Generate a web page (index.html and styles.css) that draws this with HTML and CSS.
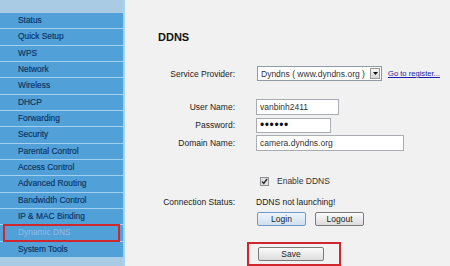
FILE: index.html
```html
<!DOCTYPE html>
<html lang="en">

<head>
    <meta charset="UTF-8">
    <meta name="viewport" content="width=device-width, initial-scale=1.0">
    <link rel="stylesheet" href="styles.css">
</head>

<body>
    <div class="page">
        <nav class="menu">
            <div class="menu-band"></div>
            <ul class="menu-list">
                <li>Status</li>
                <li>Quick Setup</li>
                <li>WPS</li>
                <li>Network</li>
                <li>Wireless</li>
                <li>DHCP</li>
                <li>Forwarding</li>
                <li>Security</li>
                <li>Parental Control</li>
                <li>Access Control</li>
                <li>Advanced Routing</li>
                <li>Bandwidth Control</li>
                <li>IP &amp; MAC Binding</li>
                <li class="active">Dynamic DNS</li>
                <li>System Tools</li>
            </ul>
        </nav>

        <main class="content">
            <h1 class="title">DDNS</h1>

            <div class="row row-provider">
                <label class="label">Service Provider:</label>
                <div class="value">
                    <div class="select">
                        <span class="select-text">Dyndns ( www.dyndns.org )</span>
                        <span class="select-arrow">
                            <svg width="5" height="3" viewBox="0 0 5 3"><path d="M0 0h5L2.5 3z" fill="#111"/></svg>
                        </span>
                    </div>
                    <a href="#" class="link">Go to register...</a>
                </div>
            </div>

            <div class="row row-user">
                <label class="label" for="username">User Name:</label>
                <div class="value"><input type="text" id="username" class="field field-user" value="vanbinh2411"></div>
            </div>

            <div class="row row-pass">
                <label class="label" for="password">Password:</label>
                <div class="value"><input type="password" id="password" class="field field-pass" value="123456"></div>
            </div>

            <div class="row row-domain">
                <label class="label" for="domain">Domain Name:</label>
                <div class="value"><input type="text" id="domain" class="field field-domain" value="camera.dyndns.org"></div>
            </div>

            <div class="row row-enable">
                <span class="label"></span>
                <div class="value">
                    <span class="check">
                        <svg width="7" height="7" viewBox="0 0 7 7"><path d="M1 3.5l1.8 2L6 1" fill="none" stroke="#2a2a2a" stroke-width="1.4"/></svg>
                    </span>
                    <span class="check-text">Enable DDNS</span>
                </div>
            </div>

            <div class="row row-status">
                <span class="label">Connection Status:</span>
                <div class="value">DDNS not launching!</div>
            </div>

            <div class="row row-buttons">
                <span class="label"></span>
                <div class="value">
                    <button class="btn btn-login">Login</button>
                    <button class="btn">Logout</button>
                </div>
            </div>

            <div class="row row-save">
                <span class="label"></span>
                <div class="value">
                    <div class="highlight">
                        <button class="btn btn-save">Save</button>
                    </div>
                </div>
            </div>
        </main>
    </div>
</body>

</html>
```

FILE: styles.css
```css
body {
    margin: 0;
    font-family: 'Liberation Sans', Arial, sans-serif;
}

.page {
    display: flex;
    width: 450px;
    height: 266px;
    overflow: hidden;
}

.menu {
    width: 123px;
    flex-shrink: 0;
    background-color: #a9cbe3;
    border-right: 2px solid #a8d3ef;
}

.menu-band {
    height: 13px;
}

.menu-list {
    list-style: none;
    margin: 0;
    padding: 0;
}

.menu-list li {
    position: relative;
    box-sizing: border-box;
    height: 16.35px;
    padding-left: 18px;
    line-height: 15.35px;
    font-size: 8.4px;
    color: #0a3364;
    -webkit-text-stroke: 0.15px #0a3364;
    background-color: #51a0d7;
    border-bottom: 1px solid #a3d0ef;
}

.menu-list li.active {
    color: #93bde2;
    -webkit-text-stroke: 0;
}

.menu-list li.active::after {
    content: '';
    position: absolute;
    top: -1px;
    bottom: -1px;
    left: 3px;
    right: 3px;
    border: 2px solid #d0262e;
}

.content {
    flex: 1;
    background-color: #f1f1f1;
    font-size: 8.5px;
    color: #222;
}

.title {
    margin: 0;
    padding: 30px 0 0 33px;
    font-size: 11px;
    line-height: 14px;
    color: #111;
}

.row {
    display: grid;
    grid-template-columns: 110px auto;
    column-gap: 21px;
    align-items: center;
}

.label {
    text-align: right;
    color: #222;
}

.value {
    display: flex;
    align-items: center;
}

.row-provider {
    margin-top: 22px;
    height: 15px;
}

.row-user {
    margin-top: 18px;
    height: 16px;
}

.row-pass {
    margin-top: 2px;
    height: 16px;
}

.row-domain {
    margin-top: 1px;
    height: 17px;
}

.row-enable {
    margin-top: 24px;
    height: 12px;
}

.row-status {
    margin-top: 8px;
    height: 14px;
}

.row-buttons {
    margin-top: 2px;
    height: 15px;
}

.row-save {
    margin-top: 16px;
    height: 24px;
}

.select {
    display: flex;
    align-items: center;
    justify-content: space-between;
    box-sizing: border-box;
    width: 125px;
    height: 15px;
    margin-left: 1px;
    padding: 0 1px 0 3px;
    background-color: #fff;
    border: 1px solid #8e9aa6;
}

.select-text {
    color: #333;
}

.select-arrow {
    display: flex;
    align-items: center;
    justify-content: center;
    box-sizing: border-box;
    width: 10px;
    height: 11px;
    background: linear-gradient(#f6f6f6, #d6d6d6);
    border: 1px solid #9a9a9a;
}

.link {
    margin-left: 6px;
    font-size: 7.6px;
    color: #1b1ba8;
}

.field {
    box-sizing: border-box;
    margin: 0;
    padding: 0 3px;
    font-family: 'Liberation Sans', Arial, sans-serif;
    font-size: 8.5px;
    color: #333;
    background-color: #fff;
    border: 1px solid #a9acb2;
    border-radius: 0;
    outline: none;
}

.field-user {
    width: 83px;
    height: 16px;
}

.field-pass {
    width: 75px;
    height: 15px;
    font-size: 12px;
    letter-spacing: 0.6px;
    color: #111;
}

.field-domain {
    width: 148px;
    height: 16px;
}

.check {
    display: flex;
    align-items: center;
    justify-content: center;
    box-sizing: border-box;
    width: 9px;
    height: 9px;
    margin-left: 4px;
    background-color: #e2e2e2;
    border: 1px solid #8d8f92;
}

.check-text {
    margin-left: 8px;
    color: #333;
}

.btn {
    box-sizing: border-box;
    width: 49px;
    height: 14px;
    margin: 0 8px 0 1px;
    padding: 0;
    font-family: 'Liberation Sans', Arial, sans-serif;
    font-size: 8.5px;
    color: #222;
    background: linear-gradient(#fbfbfb, #dcdcdc);
    border: 1px solid #7b7b7b;
    border-radius: 2px;
}

.btn-login {
    background: linear-gradient(#eef5fb, #cfe0ef);
    border-color: #6d9ac8;
}

.highlight {
    display: flex;
    align-items: center;
    box-sizing: border-box;
    height: 24px;
    margin-left: -9px;
    padding: 0 15px 0 9px;
    border: 2px solid #d0262e;
}

.btn-save {
    width: 66px;
    margin: 0;
}
```
